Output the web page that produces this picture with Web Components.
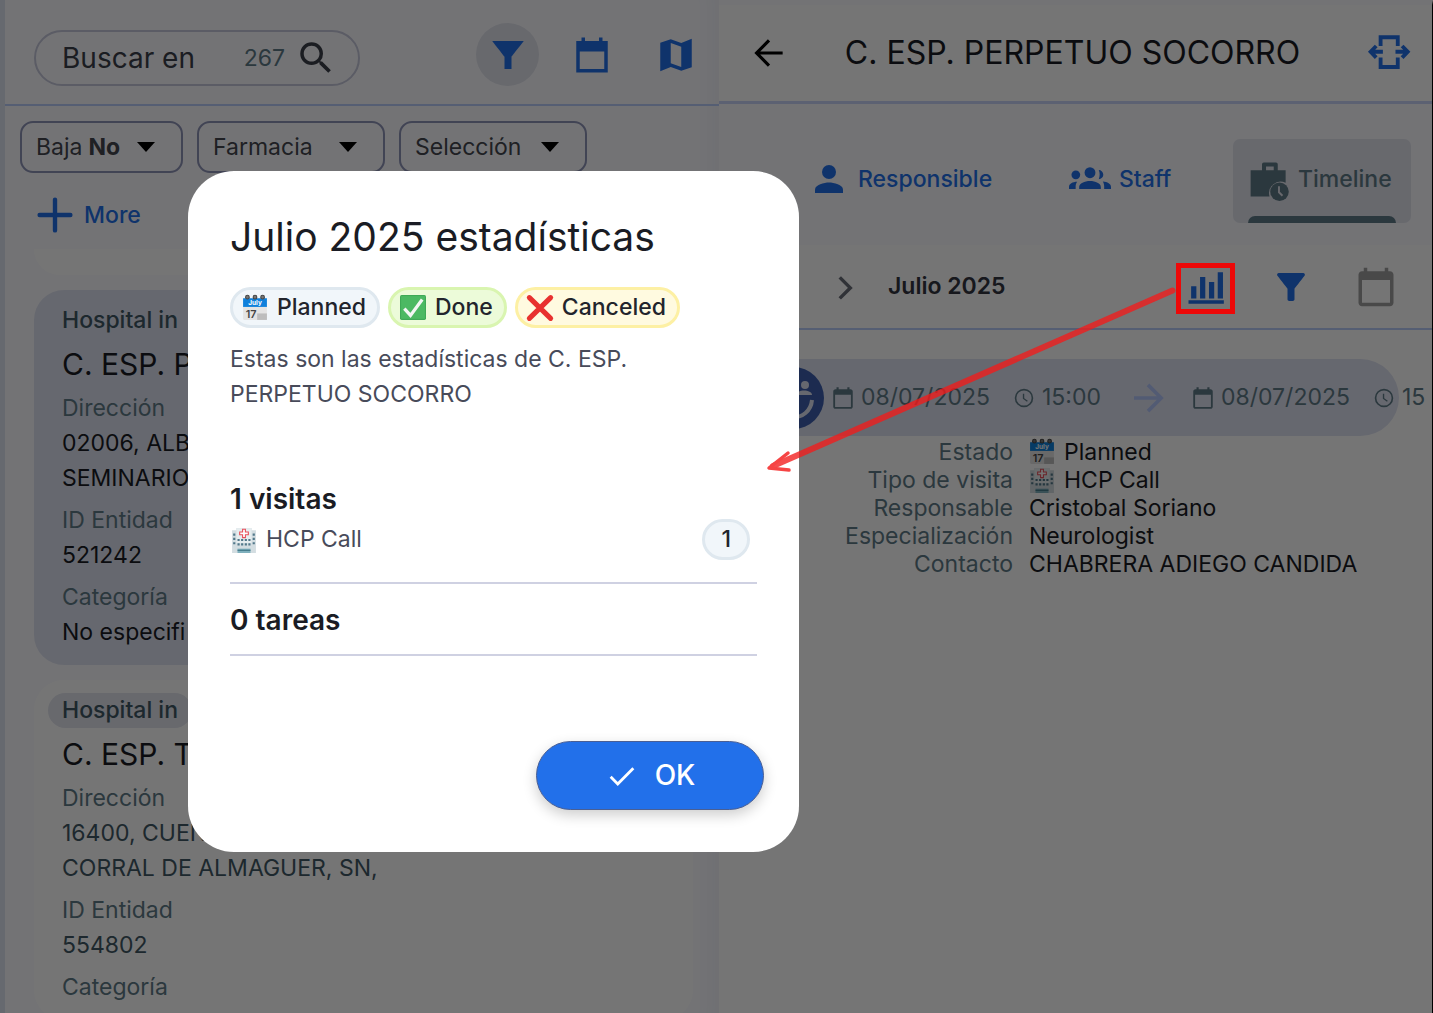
<!DOCTYPE html>
<html lang="es">
<head>
<meta charset="utf-8">
<title>C. ESP. PERPETUO SOCORRO</title>
<style>
    html, body {
        height: 100%;
    }

    body {
        --blue: #2270ea;
        --ink: #1a1c24;
        --slate: #3f5864;
        --muted: #5f7b87;
        --line: #b9cdfb;
        --tint: #dfe3f2;
        --grey: #e2e4ee;
        background: #fbfbff;
        color: var(--ink);
        font-family: Inter, "Liberation Sans", sans-serif;
        font-size: 23px;
        line-height: 35px;
        margin: 0;
        overflow: hidden;
        position: relative;
    }
</style>
</head>
<body>
<crm-app></crm-app>

<script>
    const ICONS = {
        search: '<path d="M15.5 14h-.79l-.28-.27A6.471 6.471 0 0 0 16 9.5 6.5 6.5 0 1 0 9.5 16c1.61 0 3.09-.59 4.23-1.57l.27.28v.79l5 4.99L20.49 19l-4.99-5zm-6 0C7.01 14 5 11.99 5 9.5S7.01 5 9.5 5 14 7.01 14 9.5 11.99 14 9.5 14z"/>',
        funnel: '<path d="M3 4c2 2.6 7 9 7 9v7h4v-7s5-6.400 7-9z"/>',
        funnelRound: '<path d="M4.250 5.610C6.270 8.200 10 13 10 13v6c0 .55.45 1 1 1h2c.55 0 1-.45 1-1v-6s3.720-4.800 5.740-7.390A1 1 0 0 0 18.950 4H5.040c-.83 0-1.300.95-.79 1.610z"/>',
        date: '<path d="M21 4h-3V2h-2v2H8V2H6v2H3v18h18zM19 20H5V10h14z"/>',
        dateRound: '<path d="M20 3h-1V1h-2v2H7V1H5v2H4c-1.100 0-2 .9-2 2v16c0 1.100.9 2 2 2h16c1.100 0 2-.9 2-2V5c0-1.100-.9-2-2-2zm0 18H4V8h16z"/>',
        event: '<path d="M19 4h-1V2h-2v2H8V2H6v2H5c-1.100 0-2 .9-2 2v14c0 1.100.9 2 2 2h14c1.100 0 2-.9 2-2V6c0-1.100-.9-2-2-2zm.3 16.300H4.700V9h14.600z"/>',
        map: '<path d="M15 5.100 9 3 3 5.020v16.200l6-2.330 6 2.100 6-2.020V2.770zm0 13.790-6-2.110V5.110l6 2.110z"/>',
        back: '<path d="M19.800 12H5.200M12 4.800 4.900 12l7.100 7.200" fill="none" stroke="currentColor" stroke-width="1.8"/>',
        forward: '<path d="M4 12h15M12 4.500l7.500 7.500-7.500 7.500" fill="none" stroke="currentColor" stroke-width="2.1"/>',
        chevron: '<path d="M9 6.500l6 6-6 6" fill="none" stroke="currentColor" stroke-width="2"/>',
        person: '<circle cx="12" cy="8" r="4"/><path d="M12 14c-2.700 0-8 1.300-8 4v2h16v-2c0-2.700-5.300-4-8-4z"/>',
        groups: '<circle cx="12" cy="8.400" r="3.100"/><path d="M5.800 17.700v-1.200c0-1.900 3.100-3.400 6.200-3.400s6.200 1.500 6.200 3.400v1.200z"/><circle cx="3.900" cy="9.600" r="2.500"/><path d="M0 17.700v-1.200c0-1.800 2-3 4.700-3-.6.7-.9 1.700-.9 2.700v1.500z"/><path d="M17 6.900a2.600 2.600 0 1 1 0 5.200c.7-1.700.7-3.500 0-5.200zM19.300 13.400c2.700.2 4.700 1.400 4.700 3.100v1.200h-3.900v-1.400c0-1.100-.3-2.100-.8-2.900z"/>',
        history: '<path d="M9 2.500h7a1 1 0 0 1 1 1V7h4.500v7.200A6.600 6.600 0 0 0 12.300 22H1.500V7H8V3.500a1 1 0 0 1 1-1zM10.300 4.800V7h4.400V4.800z" fill-rule="evenodd"/><circle cx="18" cy="19.300" r="5.300"/><path d="M17.700 16.200v3.400l2 2" fill="none" stroke="#e2e4ee" stroke-width="1.1"/>',
        expand: '<path d="M7.200 8V3H17v5M7.200 14.500V20H17v-5.500M8.500 11.300H1.400M4.700 8l-3.200 3.300 3.200 3.300M15.700 11.300h7.100M19.500 8l3.200 3.300-3.200 3.300" fill="none" stroke="currentColor" stroke-width="2.2"/>',
        chart: '<path d="M3.500 11.500h3v7h-3zM8.600 6.300h3v12.200h-3zM13.700 9.200h3v9.300h-3zM18.700 3.500h3v15h-3zM2 19.600h20.200v1.900H2z"/>',
        clock: '<circle cx="12" cy="12" r="9.200" fill="none" stroke="currentColor" stroke-width="1.8"/><path d="M11.500 7.300V12.500l4.200 3" fill="none" stroke="currentColor" stroke-width="1.500"/>',
        plus: '<path d="M12 3.200v17.600M3.200 12h17.600" fill="none" stroke="currentColor" stroke-width="2.500" stroke-linecap="round"/>',
        check: '<path d="M4 12.600l5 5L20 6.500" fill="none" stroke="currentColor" stroke-width="2"/>',
        caret: '<path d="M3 7h18l-9 10z"/>',
        planned: '<rect x="1" y="3" width="22" height="20" rx="1" fill="#e4e4e4"/><path d="M14 17h9v6h-9z" fill="#bdbdbd"/><path d="M1 3h22v8H1z" fill="#0f80dc"/><g fill="#777" stroke="#444"><circle cx="5" cy="2" r="1.700"/><circle cx="12" cy="2" r="1.700"/><circle cx="19" cy="2" r="1.700"/></g><text x="12" y="9.600" text-anchor="middle" font-size="6" font-weight="700" fill="#fff">July</text><text x="8.500" y="21.500" text-anchor="middle" font-size="10" font-weight="600" fill="#444">17</text>',
        hospital: '<path d="M1 3h4V1h14v2h4v21H1z" fill="#d3dde1"/><path d="M5 1h14v14H5z" fill="#e6edef"/><path d="M10.700 2h2.600v2.600H16v2.600h-2.700v2.600h-2.600V7.200H8V4.600h2.700z" fill="#fff" stroke="#e8505b"/><g fill="#52788a"><path d="M2 6h2v2H2zM2 10h2v2H2zM2 14h2v2H2zM20 6h2v2h-2zM20 10h2v2h-2zM20 14h2v2h-2zM6 11h2v2H6zM9.300 11h2v2h-2zM12.700 11h2v2h-2zM16 11h2v2h-2zM6 15h2v2H6zM9.300 15h2v2h-2zM12.700 15h2v2h-2zM16 15h2v2h-2z"/></g><path d="M6 20h12v4H6z" fill="#7fb0bd"/><path d="M6 21h12v1H6z" fill="#3c7384"/>',
        done: '<rect width="24" height="23" rx="1.500" fill="#3fa957"/><path d="M1 1h22v21H1z" fill="#4cb963"/><path d="M4 12.500l5.700 6.300L20.500 4.200" fill="none" stroke="#f3f6f4" stroke-width="3"/>',
        canceled: '<path d="M2.200 2.400 21.800 21.600M21.800 2.400 2.200 21.600" fill="none" stroke="#e8312f" stroke-width="4.700" stroke-linecap="round"/>'
    };

    function generateTemplate(html) {
        const template = document.createElement('template');
        template.innerHTML = html;
        return template;
    }

    class BaseElement extends HTMLElement {

        constructor() {
            super();
            this.attachShadow({ mode: 'open' });
        }

        connectedCallback() {
            this.shadowRoot.replaceChildren(generateTemplate(this.template()).content.cloneNode(true));
        }
    }

    class AppIcon extends BaseElement {
        template() {
            const size = this.getAttribute('size') || 42;
            return `
                <style>
                    :host {
                        display: inline-flex;
                        flex: none;
                    }
                    svg {
                        display: block;
                        fill: currentColor;
                        overflow: visible;
                    }
                </style>
                <svg width="${size}" height="${size}" viewBox="0 0 24 24" aria-hidden="true">${ICONS[this.getAttribute('name')]}</svg>
            `;
        }
    }

    class IconButton extends BaseElement {
        template() {
            return `
                <style>
                    :host {
                        color: var(--blue);
                        display: block;
                        flex: none;
                    }
                    button {
                        align-items: center;
                        background: none;
                        border: 0;
                        border-radius: 50%;
                        color: inherit;
                        display: flex;
                        height: 63px;
                        justify-content: center;
                        padding: 0;
                        width: 63px;
                    }
                    :host([active]) button {
                        background: var(--grey);
                    }
                </style>
                <button type="button" aria-label="${this.getAttribute('label')}">
                    <app-icon name="${this.getAttribute('icon')}"></app-icon>
                </button>
            `;
        }
    }

    class SearchBar extends BaseElement {
        template() {
            return `
                <style>
                    :host {
                        align-items: flex-start;
                        border-bottom: 2px solid var(--line);
                        box-sizing: border-box;
                        display: flex;
                        height: 101px;
                        padding: 18px 12px 0 29px;
                    }
                    label {
                        align-items: center;
                        border: 2px solid #c6c8dc;
                        border-radius: 28px;
                        box-sizing: border-box;
                        display: flex;
                        height: 56px;
                        margin-top: 7px;
                        padding: 0 21px 0 26px;
                        width: 326px;
                    }
                    input {
                        background: none;
                        border: 0;
                        color: #3c3f4a;
                        flex: 1;
                        font: inherit;
                        font-size: 28px;
                        min-width: 0;
                        outline: 0;
                        padding: 0;
                    }
                    output {
                        color: var(--muted);
                        margin-right: 10px;
                    }
                    nav {
                        display: flex;
                        gap: 21px;
                        margin-left: auto;
                    }
                    label app-icon {
                        color: #3c3f4a;
                    }
                </style>
                <label>
                    <input type="text" value="Buscar en" aria-label="Buscar">
                    <output>267</output>
                    <app-icon name="search"></app-icon>
                </label>
                <nav>
                    <icon-button icon="funnel" label="Filtros" active></icon-button>
                    <icon-button icon="date" label="Calendario"></icon-button>
                    <icon-button icon="map" label="Mapa"></icon-button>
                </nav>
            `;
        }
    }

    class FilterChip extends BaseElement {
        template() {
            return `
                <style>
                    :host {
                        display: block;
                    }
                    label {
                        align-items: center;
                        border: 2px solid #8f94b8;
                        border-radius: 13px;
                        box-sizing: border-box;
                        color: #44474f;
                        display: flex;
                        gap: 6px;
                        height: 52px;
                        min-width: 188px;
                        padding: 0 23px 0 14px;
                    }
                    :host([narrow]) label {
                        min-width: 163px;
                    }
                    :host([narrow]) select {
                        font-weight: 700;
                    }
                    select {
                        appearance: none;
                        background: none;
                        border: 0;
                        color: inherit;
                        font: inherit;
                        padding: 0;
                    }
                    app-icon {
                        color: #000;
                        margin-left: auto;
                    }
                </style>
                <label>
                    <slot></slot>
                    <select aria-label="${this.getAttribute('value')}"><option>${this.getAttribute('value')}</option></select>
                    <app-icon name="caret" size="24"></app-icon>
                </label>
            `;
        }
    }

    class FilterBar extends BaseElement {
        template() {
            return `
                <style>
                    :host {
                        display: flex;
                        flex-wrap: wrap;
                        gap: 14px;
                        padding: 15px 15px 0;
                    }
                    button {
                        align-items: center;
                        background: none;
                        border: 0;
                        color: var(--blue);
                        display: flex;
                        font: inherit;
                        font-weight: 500;
                        gap: 8px;
                        height: 56px;
                        padding: 0 14px;
                    }
                </style>
                <filter-chip value="No" narrow>Baja</filter-chip>
                <filter-chip value="Farmacia"></filter-chip>
                <filter-chip value="Selección"></filter-chip>
                <button type="button"><app-icon name="plus"></app-icon>More</button>
            `;
        }
    }

    class EntityCard extends BaseElement {
        template() {
            return `
                <style>
                    :host {
                        background: #fff;
                        border-radius: 30px;
                        color: var(--slate);
                        display: block;
                        padding: 13px 14px 15px;
                    }
                    :host([selected]) {
                        background: var(--tint);
                        color: var(--ink);
                    }
                    .kind {
                        background: var(--grey);
                        border-radius: 18px;
                        color: var(--slate);
                        display: inline-block;
                        font-weight: 500;
                        padding: 0 14px;
                    }
                    :host([selected]) .kind {
                        background: none;
                    }
                    h2 {
                        color: var(--ink);
                        font-size: 30px;
                        font-weight: 400;
                        line-height: 40px;
                        margin: 6px 14px 0;
                    }
                    dl {
                        margin: 0 14px;
                    }
                </style>
                <div class="kind">Hospital in</div>
                <h2>${this.getAttribute('name')}</h2>
                <dl><slot></slot></dl>
            `;
        }
    }

    class EntityField extends BaseElement {
        template() {
            return `
                <style>
                    :host {
                        display: block;
                        padding-top: 7px;
                    }
                    dt {
                        color: var(--muted);
                    }
                    dd {
                        margin: 0;
                    }
                </style>
                <dt>${this.getAttribute('label')}</dt>
                <dd><slot></slot></dd>
            `;
        }
    }

    class EntityPanel extends BaseElement {
        template() {
            return `
                <style>
                    :host {
                        box-shadow: inset -24px 0 20px -16px #f1f2fa;
                        display: block;
                        min-width: 0;
                        overflow: hidden;
                        padding-top: 5px;
                    }
                    .list {
                        display: grid;
                        gap: 15px;
                        margin-top: 6px;
                        padding: 0 26px 0 29px;
                    }
                    .previous {
                        background: #fff;
                        border-radius: 0 0 30px 30px;
                        height: 26px;
                    }
                </style>
                <search-bar></search-bar>
                <filter-bar></filter-bar>
                <div class="list">
                    <div class="previous"></div>
                    <entity-card name="C. ESP. P" selected>
                        <entity-field label="Dirección">02006, ALB<br>SEMINARIO</entity-field>
                        <entity-field label="ID Entidad">521242</entity-field>
                        <entity-field label="Categoría">No especifi</entity-field>
                    </entity-card>
                    <entity-card name="C. ESP. T">
                        <entity-field label="Dirección">16400, CUEN<br>CORRAL DE ALMAGUER, SN,</entity-field>
                        <entity-field label="ID Entidad">554802</entity-field>
                        <entity-field label="Categoría"></entity-field>
                    </entity-card>
                </div>
            `;
        }
    }

    class TabButton extends BaseElement {
        template() {
            return `
                <style>
                    :host {
                        display: block;
                    }
                    button {
                        align-items: center;
                        background: none;
                        border: 0;
                        border-radius: 7px;
                        color: var(--blue);
                        display: flex;
                        font: inherit;
                        font-weight: 500;
                        gap: 8px;
                        height: 84px;
                        padding: 0 15px 4px;
                        position: relative;
                    }
                    :host([active]) button {
                        background: var(--grey);
                        color: var(--muted);
                        min-width: 178px;
                    }
                    :host([active]) button::after {
                        background: var(--muted);
                        border-radius: 7px 7px 0 0;
                        bottom: 0;
                        content: "";
                        height: 7px;
                        left: 15px;
                        position: absolute;
                        right: 15px;
                    }
                </style>
                <button type="button" role="tab"><app-icon name="${this.getAttribute('icon')}"></app-icon><slot></slot></button>
            `;
        }
    }

    class VisitBar extends BaseElement {
        template() {
            return `
                <style>
                    :host {
                        align-items: center;
                        background: var(--tint);
                        border-radius: 39px;
                        color: var(--muted);
                        display: flex;
                        height: 77px;
                        white-space: nowrap;
                    }
                    svg, time, app-icon {
                        flex: none;
                    }
                    time {
                        min-width: 138px;
                        margin: 0 14px 0 5px;
                    }
                    .hour {
                        min-width: 65px;
                        margin: 0 20px 0 7px;
                    }
                    .to {
                        color: #b4c6fb;
                        margin-right: 21px;
                    }
                    svg {
                        margin: 0 6px 0 17px;
                    }
                </style>
                <svg width="62" height="62" viewBox="0 0 62 62" aria-hidden="true">
                    <circle cx="31" cy="31" r="31" fill="#3d5fae"/>
                    <g fill="#dfe3f2">
                        <circle cx="19" cy="18" r="5"/>
                        <path d="M9 28c0-8 20-8 20 0z"/>
                        <circle cx="43" cy="18" r="4"/>
                        <path d="M34 28c0-6 16-6 16 0z"/>
                    </g>
                    <path d="M12 33c2 23 36 23 38 0" fill="none" stroke="#dfe3f2" stroke-width="4"/>
                </svg>
                <app-icon name="event" size="26"></app-icon>
                <time>08/07/2025</time>
                <app-icon name="clock" size="22"></app-icon>
                <time class="hour">15:00</time>
                <app-icon class="to" name="forward" size="42"></app-icon>
                <app-icon name="event" size="26"></app-icon>
                <time>08/07/2025</time>
                <app-icon name="clock" size="22"></app-icon>
                <time class="hour">15</time>
            `;
        }
    }

    class DetailPanel extends BaseElement {
        template() {
            return `
                <style>
                    :host {
                        background: #fff;
                        border-right: 1px solid #000;
                        border-top: 5px solid #fbfbff;
                        box-sizing: border-box;
                        display: block;
                        min-width: 0;
                        overflow: hidden;
                    }
                    header {
                        align-items: center;
                        border-bottom: 3px solid #c8d4f8;
                        display: flex;
                        height: 96px;
                        padding: 0 12px 0 18px;
                    }
                    header icon-button:first-child {
                        color: #000;
                    }
                    h1 {
                        flex: 1;
                        font-size: 32px;
                        font-weight: 400;
                        line-height: 40px;
                        margin: 0;
                        padding-right: 12px;
                        text-align: center;
                    }
                    .tabs {
                        background: #fafaff;
                        display: flex;
                        height: 106px;
                        justify-content: space-between;
                        padding: 35px 21px 0 74px;
                    }
                    .month {
                        align-items: center;
                        border-bottom: 2px solid var(--line);
                        display: flex;
                        gap: 22px;
                        height: 83px;
                        padding: 0 25px 0 105px;
                    }
                    .month app-icon {
                        color: #6a6d78;
                    }
                    .month strong {
                        color: #33363f;
                        font-weight: 600;
                        margin-right: auto;
                    }
                    .month icon-button:last-child {
                        color: #a0a0a0;
                    }
                    visit-bar {
                        margin: 29px 33px 0 26px;
                    }
                    dl {
                        display: grid;
                        gap: 0 16px;
                        grid-template-columns: 294px 1fr;
                        line-height: 28px;
                        margin: 2px 0 0;
                    }
                    dt {
                        color: var(--muted);
                        text-align: right;
                    }
                    dd {
                        align-items: center;
                        display: flex;
                        gap: 9px;
                        margin: 0;
                    }
                </style>
                <header>
                    <icon-button icon="back" label="Volver"></icon-button>
                    <h1>C. ESP. PERPETUO SOCORRO</h1>
                    <icon-button icon="expand" label="Expandir"></icon-button>
                </header>
                <div class="tabs" role="tablist">
                    <tab-button icon="person">Responsible</tab-button>
                    <tab-button icon="groups">Staff</tab-button>
                    <tab-button icon="history" active>Timeline</tab-button>
                </div>
                <div class="month">
                    <app-icon name="chevron"></app-icon>
                    <strong>Julio 2025</strong>
                    <icon-button icon="chart" label="Estadísticas"></icon-button>
                    <icon-button icon="funnelRound" label="Filtros"></icon-button>
                    <icon-button icon="dateRound" label="Hoy"></icon-button>
                </div>
                <visit-bar></visit-bar>
                <dl>
                    <dt>Estado</dt><dd><app-icon name="planned" size="26"></app-icon>Planned</dd>
                    <dt>Tipo de visita</dt><dd><app-icon name="hospital" size="26"></app-icon>HCP Call</dd>
                    <dt>Responsable</dt><dd>Cristobal Soriano</dd>
                    <dt>Especialización</dt><dd>Neurologist</dd>
                    <dt>Contacto</dt><dd>CHABRERA ADIEGO CANDIDA</dd>
                </dl>
            `;
        }
    }

    class StatusPill extends BaseElement {
        template() {
            return `
                <style>
                    :host {
                        align-items: center;
                        background: #f1f6fa;
                        border: 3px solid #dfe8ef;
                        border-radius: 21px;
                        box-sizing: border-box;
                        color: #22242c;
                        display: inline-flex;
                        font-weight: 500;
                        gap: 9px;
                        height: 41px;
                        padding: 0 11px 0 9px;
                    }
                    :host([kind="done"]) {
                        background: #ecfbd9;
                        border-color: #d9f5b0;
                    }
                    :host([kind="canceled"]) {
                        background: #fffae0;
                        border-color: #fdf0a4;
                    }
                    :host([kind="count"]) {
                        padding: 0 16px;
                    }
                </style>
                <slot></slot>
            `;
        }
    }

    class StatsDialog extends BaseElement {
        template() {
            return `
                <style>
                    :host {
                        background: rgba(0, 0, 0, .54);
                        box-sizing: border-box;
                        inset: 0;
                        padding: 171px 188px;
                        position: absolute;
                    }
                    section {
                        background: #fff;
                        border-radius: 46px;
                        box-sizing: border-box;
                        max-width: 611px;
                        padding: 42px;
                    }
                    h2 {
                        font-size: 39px;
                        font-weight: 400;
                        line-height: 48px;
                        margin: 0 0 26px;
                    }
                    .legend {
                        display: flex;
                        gap: 8px;
                    }
                    p {
                        color: #484b5a;
                        margin: 14px 0 69px;
                        max-width: 440px;
                    }
                    h3 {
                        font-size: 28px;
                        font-weight: 600;
                        line-height: 36px;
                        margin: 0;
                    }
                    .group {
                        border-bottom: 2px solid #cfd1e2;
                        padding-bottom: 16px;
                    }
                    .group + .group {
                        padding-top: 18px;
                    }
                    .row {
                        align-items: center;
                        color: #484b5a;
                        display: flex;
                        gap: 9px;
                        padding: 2px 7px 6px 1px;
                    }
                    .row status-pill {
                        margin-left: auto;
                    }
                    button {
                        align-items: center;
                        background: var(--blue);
                        border: 1px solid #4a5f94;
                        border-radius: 35px;
                        box-shadow: 0 5px 14px rgba(0, 0, 0, .2);
                        color: #fff;
                        display: flex;
                        font: inherit;
                        font-size: 28px;
                        font-weight: 500;
                        gap: 16px;
                        height: 69px;
                        justify-content: center;
                        margin: 85px -7px 0 auto;
                        width: 228px;
                    }
                </style>
                <section role="dialog" aria-labelledby="title">
                    <h2 id="title">Julio 2025 estadísticas</h2>
                    <div class="legend">
                        <status-pill><app-icon name="planned" size="26"></app-icon>Planned</status-pill>
                        <status-pill kind="done"><app-icon name="done" size="26"></app-icon>Done</status-pill>
                        <status-pill kind="canceled"><app-icon name="canceled" size="26"></app-icon>Canceled</status-pill>
                    </div>
                    <p>Estas son las estadísticas de C. ESP. PERPETUO SOCORRO</p>
                    <div class="group">
                        <h3>1 visitas</h3>
                        <div class="row">
                            <app-icon name="hospital" size="26"></app-icon>HCP Call
                            <status-pill kind="count">1</status-pill>
                        </div>
                    </div>
                    <div class="group">
                        <h3>0 tareas</h3>
                    </div>
                    <button type="button"><app-icon name="check" size="34"></app-icon>OK</button>
                </section>
            `;
        }
    }

    // red callout: frames the chart button and points at the dialog
    class CalloutArrow extends BaseElement {
        template() {
            return `
                <style>
                    :host {
                        left: 760px;
                        pointer-events: none;
                        position: absolute;
                        top: 260px;
                    }
                    svg {
                        display: block;
                    }
                </style>
                <svg width="480" height="220" viewBox="0 0 480 220" aria-hidden="true">
                    <path d="M412.500 30.500 13 206" stroke="#f21b1b" stroke-opacity=".78" stroke-width="6" stroke-linecap="round"/>
                    <path d="M28 193 9 208l20 2" fill="none" stroke="#f64444" stroke-width="3.500" stroke-linecap="round" stroke-linejoin="round"/>
                    <rect x="418.500" y="5.500" width="54" height="46" fill="none" stroke="#ed0808" stroke-width="5"/>
                </svg>
            `;
        }
    }

    class CrmApp extends BaseElement {
        template() {
            return `
                <style>
                    :host {
                        border-left: 5px solid #dfe4f2;
                        box-sizing: border-box;
                        display: grid;
                        grid-template-columns: 1fr 1fr;
                        height: 100%;
                    }
                </style>
                <entity-panel></entity-panel>
                <detail-panel></detail-panel>
                <stats-dialog></stats-dialog>
                <callout-arrow></callout-arrow>
            `;
        }
    }

    window.customElements.define('app-icon', AppIcon);
    window.customElements.define('icon-button', IconButton);
    window.customElements.define('search-bar', SearchBar);
    window.customElements.define('filter-chip', FilterChip);
    window.customElements.define('filter-bar', FilterBar);
    window.customElements.define('entity-card', EntityCard);
    window.customElements.define('entity-field', EntityField);
    window.customElements.define('entity-panel', EntityPanel);
    window.customElements.define('tab-button', TabButton);
    window.customElements.define('visit-bar', VisitBar);
    window.customElements.define('detail-panel', DetailPanel);
    window.customElements.define('status-pill', StatusPill);
    window.customElements.define('stats-dialog', StatsDialog);
    window.customElements.define('callout-arrow', CalloutArrow);
    window.customElements.define('crm-app', CrmApp);
</script>
</body>
</html>
